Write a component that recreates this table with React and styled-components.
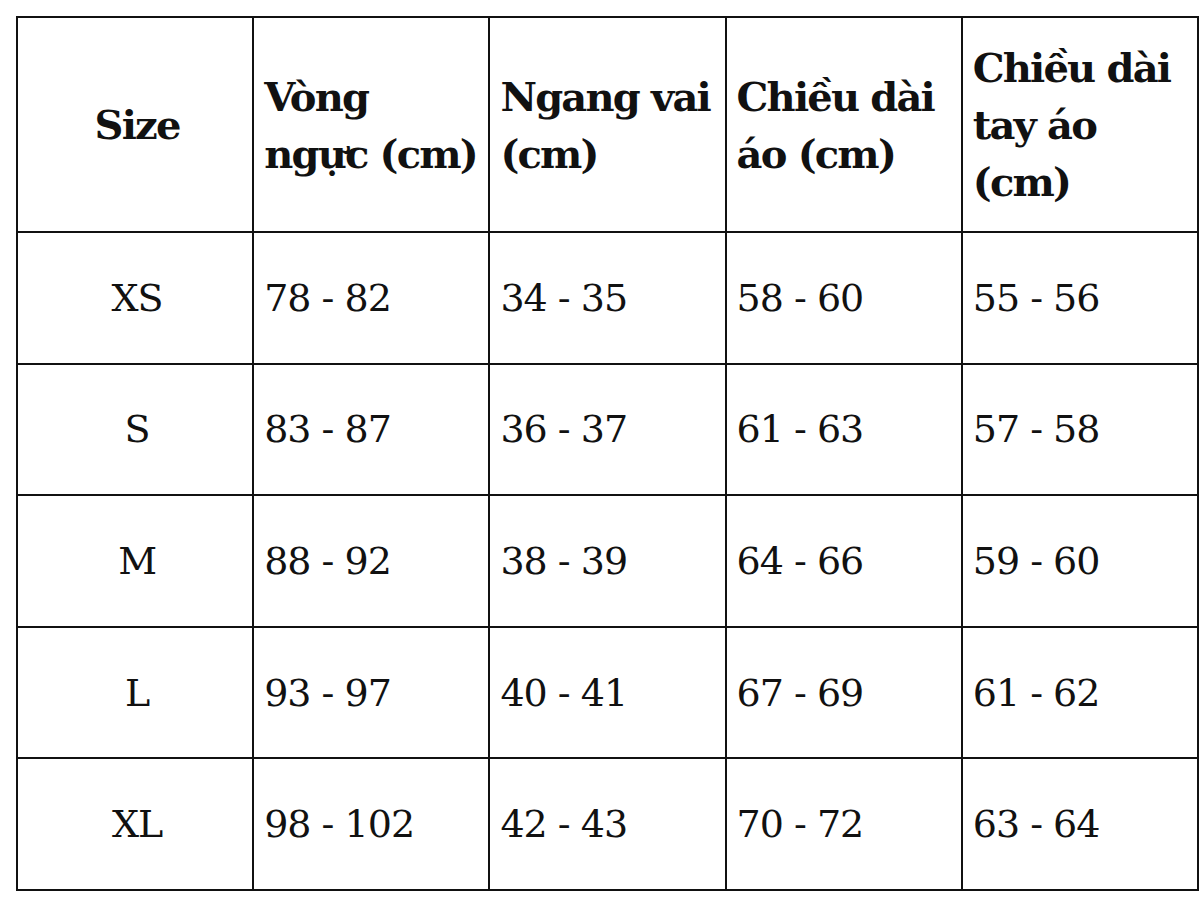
import { createGlobalStyle, styled } from 'styled-components';

const GlobalStyle = createGlobalStyle`
  html, body {
    margin: 0;
    padding: 0;
    background: #ffffff;
  }
  body {
    font-family: "DejaVu Serif", serif;
    color: #111111;
  }
`;

const serif = `"DejaVu Serif", serif`;

const Page = styled.div`
  width: 1200px;
  height: 900px;
  padding: 16px 0 0 16px;
  box-sizing: border-box;
  background: #ffffff;
`;

const Table = styled.table`
  width: 1183px;
  border-collapse: collapse;
  table-layout: fixed;
  font-family: ${serif};
`;

const HeadRow = styled.tr`
  height: 215px;
`;

const BodyRow = styled.tr`
  height: 131.6px;
`;

const HeadCell = styled.th`
  border: 2px solid #111111;
  padding: 0 6px 0 10px;
  font-family: ${serif};
  font-size: 40px;
  line-height: 57px;
  font-weight: 700;
  text-align: ${({ $center }) => ($center ? 'center' : 'left')};
  vertical-align: middle;
  white-space: nowrap;
  letter-spacing: -1.8px;
`;

const Cell = styled.td`
  border: 2px solid #111111;
  padding: 0 6px 0 10px;
  font-family: ${serif};
  font-size: 38px;
  line-height: 52px;
  font-weight: 400;
  text-align: ${({ $center }) => ($center ? 'center' : 'left')};
  vertical-align: middle;
  white-space: nowrap;
  letter-spacing: -1px;
`;

const headers = [
  ['Size'],
  ['Vòng', 'ngực (cm)'],
  ['Ngang vai', '(cm)'],
  ['Chiều dài', 'áo (cm)'],
  ['Chiều dài', 'tay áo', '(cm)'],
];

const rows = [
  ['XS', '78 - 82', '34 - 35', '58 - 60', '55 - 56'],
  ['S', '83 - 87', '36 - 37', '61 - 63', '57 - 58'],
  ['M', '88 - 92', '38 - 39', '64 - 66', '59 - 60'],
  ['L', '93 - 97', '40 - 41', '67 - 69', '61 - 62'],
  ['XL', '98 - 102', '42 - 43', '70 - 72', '63 - 64'],
];

const App = () => {
  return (
    <>
      <GlobalStyle />
      <Page>
        <Table>
          <thead>
            <HeadRow>
              {headers.map((lines, i) => (
                <HeadCell key={i} $center={i === 0}>
                  {lines.map((line, j) => (
                    <span key={j}>
                      {j > 0 && <br />}
                      {line}
                    </span>
                  ))}
                </HeadCell>
              ))}
            </HeadRow>
          </thead>
          <tbody>
            {rows.map((row) => (
              <BodyRow key={row[0]}>
                {row.map((value, i) => (
                  <Cell key={i} $center={i === 0}>
                    {value}
                  </Cell>
                ))}
              </BodyRow>
            ))}
          </tbody>
        </Table>
      </Page>
    </>
  );
};

export default App;
